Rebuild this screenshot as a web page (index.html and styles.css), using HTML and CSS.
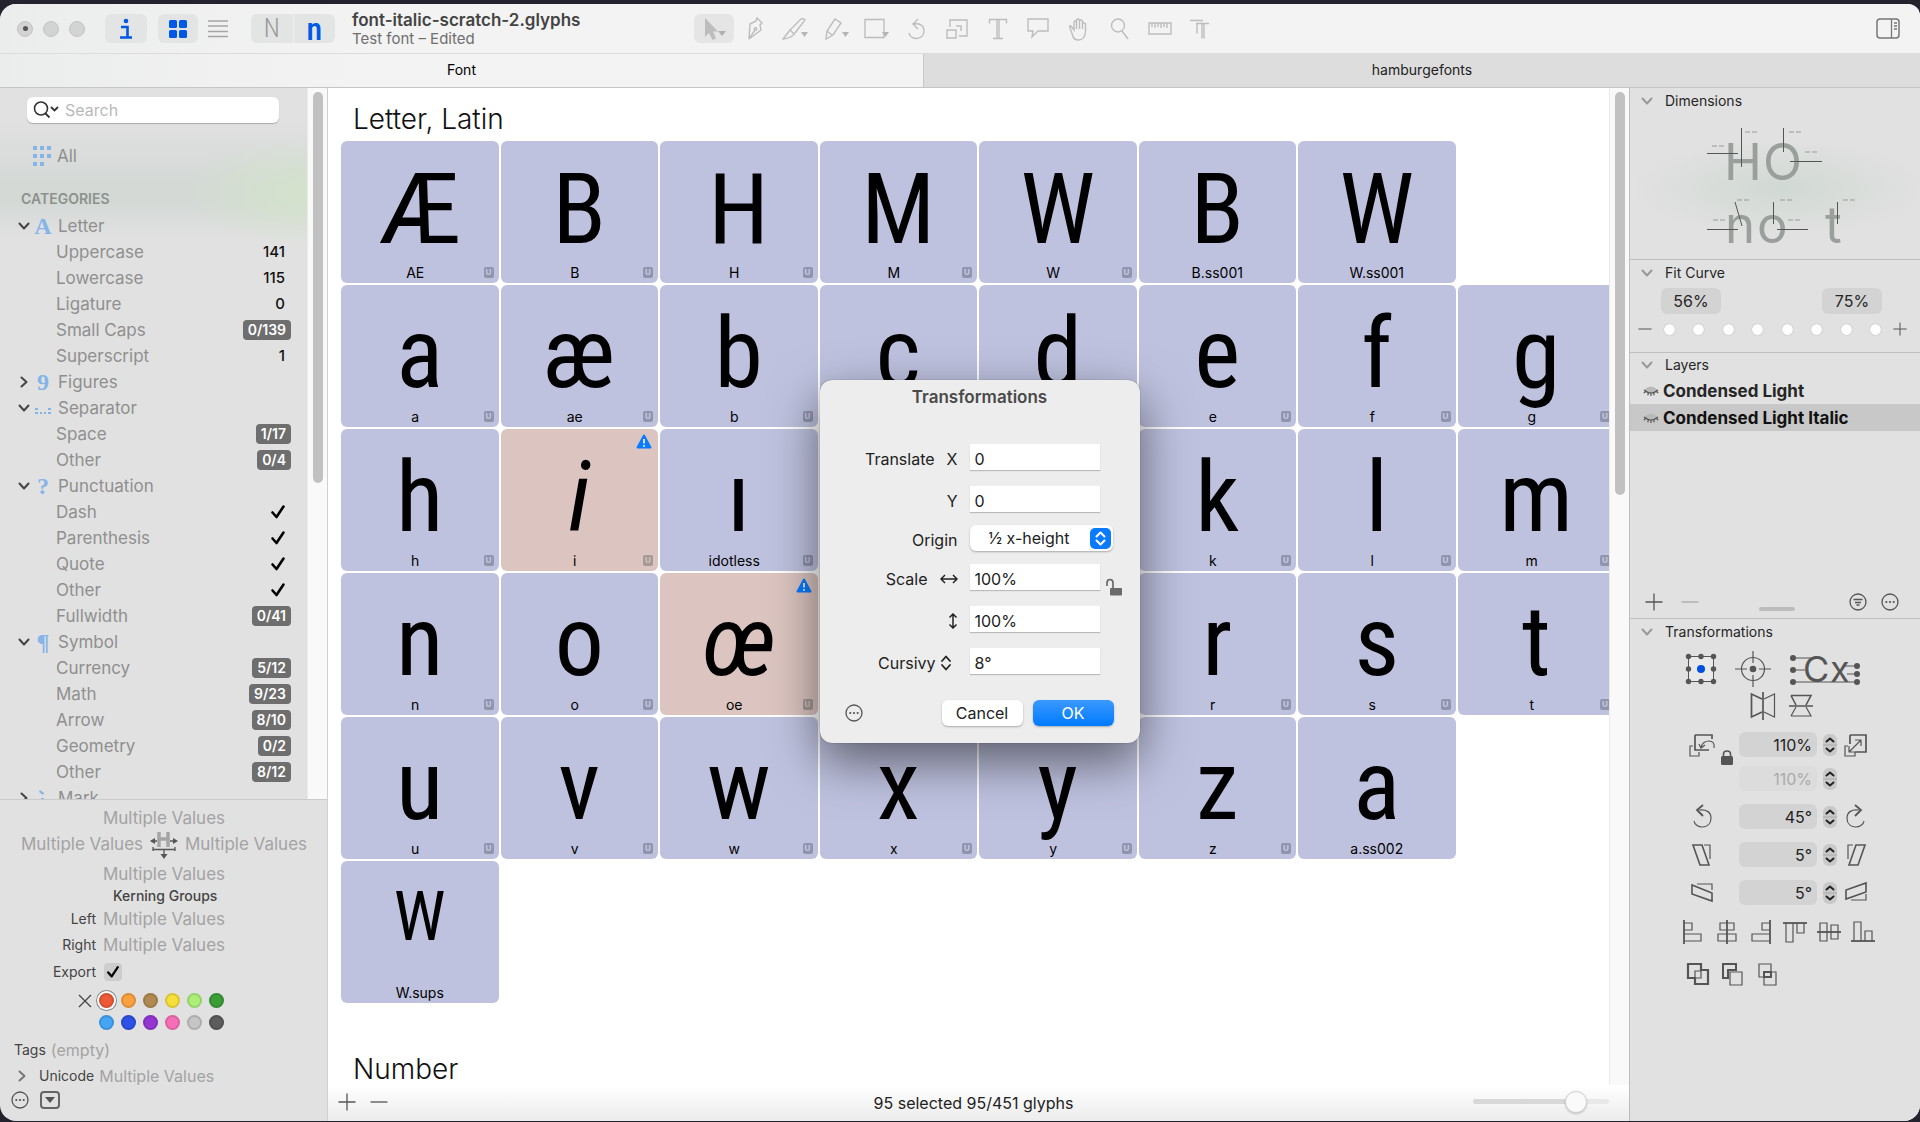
FILE: index.html
```html
<!DOCTYPE html>
<html lang="en">
<head>
<meta charset="utf-8">
<title>font-italic-scratch-2.glyphs</title>
<link rel="stylesheet" href="styles.css">
</head>
<body>
<svg class="defs" aria-hidden="true">
  <symbol id="down" viewBox="0 0 12 12"><path d="M1.5 3.5 6 8.5l4.500-5" fill="none" stroke="currentColor" stroke-width="2" stroke-linecap="round" stroke-linejoin="round"/></symbol>
  <symbol id="right" viewBox="0 0 12 12"><path d="M3.500 1.500 8.500 6l-5 4.500" fill="none" stroke="currentColor" stroke-width="2" stroke-linecap="round" stroke-linejoin="round"/></symbol>
  <symbol id="check" viewBox="0 0 16 16"><path d="M2.500 8.500 6.500 13 13.500 2.500" fill="none" stroke="currentColor" stroke-width="2.600" stroke-linecap="round" stroke-linejoin="round"/></symbol>
  <symbol id="more" viewBox="0 0 18 18"><circle cx="9" cy="9" r="8" fill="none" stroke="currentColor" stroke-width="1.300"/><circle cx="5.300" cy="9" r="1.100" fill="currentColor"/><circle cx="9" cy="9" r="1.100" fill="currentColor"/><circle cx="12.700" cy="9" r="1.100" fill="currentColor"/></symbol>
  <symbol id="plus" viewBox="0 0 18 18"><path d="M9 .5v17M.5 9h17" stroke="currentColor" stroke-width="1.300"/></symbol>
  <symbol id="minus" viewBox="0 0 18 18"><path d="M.5 9h17" stroke="currentColor" stroke-width="1.300"/></symbol>
  <symbol id="updown" viewBox="0 0 12 18"><path d="M2 7l4-4.500L10 7M2 11l4 4.500L10 11" fill="none" stroke="currentColor" stroke-width="1.800" stroke-linecap="round" stroke-linejoin="round"/></symbol>
  <symbol id="step" viewBox="0 0 14 22"><rect width="14" height="22" rx="6" fill="#c9c9c9"/><path d="M0 11h14" stroke="#aaa"/><path d="M3.500 7.500 7 4.500l3.500 3M3.500 14.500l3.500 3 3.500-3" fill="none" stroke="#222" stroke-width="2" stroke-linecap="round" stroke-linejoin="round"/></symbol>
  <symbol id="warn" viewBox="0 0 16 15"><path d="M8 1.500 14.500 13.500h-13z" fill="#0a7aff" stroke="#0a7aff" stroke-width="2" stroke-linejoin="round"/><path d="M8 5v4.500M8 11v1.800" stroke="#fff" stroke-width="1.600"/></symbol>
  <symbol id="eye" viewBox="0 0 16 12"><path d="M1 5Q8-2 15 5L14 7Q8 11 2 7z" fill="#b9b9b9"/><path d="M1 5q7 6 14 0M2.500 6.500.8 8.200M5.500 8l-.8 2.200M8 8.400V11M10.500 8l.8 2.200M13.500 6.500l1.700 1.700" fill="none" stroke="#555" stroke-width="1.200"/></symbol>
</svg>

<div class="window">
  <header class="toolbar">
    <div class="lights"><span class="light edited"></span><span class="light"></span><span class="light"></span></div>
    <button class="tool on info" type="button" aria-label="Info"><svg width="14" height="22" viewBox="0 0 14 22"><circle cx="7" cy="3" r="2.300"/><path d="M2 9h6.500v10M1 19.500h12" fill="none" stroke="currentColor" stroke-width="2.600"/></svg></button>
    <div class="views">
      <button class="tool on" type="button" aria-label="Grid view"><svg width="20" height="20" viewBox="0 0 20 20"><rect x="1" y="1" width="8" height="8" rx="1.500"/><rect x="11" y="1" width="8" height="8" rx="1.500"/><rect x="1" y="11" width="8" height="8" rx="1.500"/><rect x="11" y="11" width="8" height="8" rx="1.500"/></svg></button>
      <button class="tool" type="button" aria-label="List view"><svg width="20" height="20" viewBox="0 0 20 20"><path d="M0 2h20M0 7h20M0 12.500h20M0 17.500h20" stroke="#a5a5a5" stroke-width="1.500"/></svg></button>
    </div>
    <div class="cases"><button type="button" class="case upper">N</button><button type="button" class="case lower">n</button></div>
    <div class="titles"><h1>font-italic-scratch-2.glyphs</h1><p>Test font – Edited</p></div>
    <div class="tools">
      <button class="tool on" type="button" aria-label="Select"><svg width="26" height="24" viewBox="0 0 26 24"><path d="M4 1v19l4-4 3.500 7 3.500-1.500-3-7h5z" fill="#bdbdbd"/><path d="M17 14h8l-4 5z" fill="#b0b0b0"/></svg></button>
      <button class="tool" type="button" aria-label="Draw"><svg width="26" height="24" viewBox="0 0 26 24"><path d="M7 22 8 7l6-3 1-3 5 5-2 2 1 5-12 9 6-9"/><circle cx="13.500" cy="12" r="1.300"/></svg></button>
      <button class="tool" type="button" aria-label="Knife"><svg width="26" height="24" viewBox="0 0 26 24"><path d="M1 22q4-5 7-9l11-11q3-1 4 1L13 16q-3 5-12 6zM8 13l4 4"/><path class="tip" d="M19 15h7l-3.500 5z"/></svg></button>
      <button class="tool" type="button" aria-label="Pencil"><svg width="26" height="24" viewBox="0 0 26 24"><path d="M3 22 4 14 12 2l6 4-8 12zM4 14l5 4"/><path class="tip" d="M19 15h7l-3.500 5z"/></svg></button>
      <button class="tool" type="button" aria-label="Rectangle"><svg width="26" height="24" viewBox="0 0 26 24"><path d="M2 2.500h19v18H2z"/><path class="tip" d="M19 15h7l-3.500 5z"/></svg></button>
      <button class="tool" type="button" aria-label="Rotate"><svg width="26" height="24" viewBox="0 0 26 24"><path d="M5 16c2 8 15 7 15-2 0-6-5-8-10-7M14 2 9 7l5 5"/></svg></button>
      <button class="tool" type="button" aria-label="Scale"><svg width="26" height="24" viewBox="0 0 26 24"><path d="M6 10V3h17v16h-8M3 13h9v8H3zM12 9h5v5"/></svg></button>
      <button class="tool" type="button" aria-label="Text"><svg width="26" height="24" viewBox="0 0 26 24"><path d="M4.500 6.500v-4h17v4M12 2.500v19M14 2.500v19M8 21.500h10"/></svg></button>
      <button class="tool" type="button" aria-label="Annotate"><svg width="26" height="24" viewBox="0 0 26 24"><path d="M3 2h20v12H13l-6 6 1-6H3z"/></svg></button>
      <button class="tool" type="button" aria-label="Hand"><svg width="26" height="24" viewBox="0 0 26 24"><path d="M4 11q-1-3 1-2l3 4V5q1-2 2.500 0V3q1.500-2 3 0v1q1.500-2 3 0v2q1.500-1 3 1v8q-1 8-7 8-5 0-6-5zM10.500 5v7M13.500 4v8M16.500 5v7"/></svg></button>
      <button class="tool" type="button" aria-label="Zoom"><svg width="26" height="24" viewBox="0 0 26 24"><circle cx="12" cy="8.500" r="6.500"/><path d="M16 14l6 8"/></svg></button>
      <button class="tool" type="button" aria-label="Measure"><svg width="26" height="24" viewBox="0 0 26 24"><path d="M2 6h22v11H2zM5 6v4M8 6v5M11 6v4M14 6v5M17 6v4M20 6v5"/></svg></button>
      <button class="tool" type="button" aria-label="True type"><svg width="26" height="24" viewBox="0 0 26 24"><path d="M3 3.500h13M9 6.500h13M10 6.500v10M15 6.500v15M17 6.500v15"/></svg></button>
    </div>
    <button class="tool panel-toggle" type="button" aria-label="Toggle sidebar"><svg width="24" height="21" viewBox="0 0 24 21"><rect x="1" y="1" width="22" height="19" rx="3" fill="none" stroke="#777" stroke-width="1.500"/><path d="M15.500 1v19M18 5h3M18 8h3M18 11h3" stroke="#777" stroke-width="1.300"/></svg></button>
  </header>

  <nav class="tabs"><a href="#font" class="tab active">Font</a><a href="#hamburgefonts" class="tab">hamburgefonts</a></nav>

  <div class="body">
    <aside class="left">
      <div class="browser">
        <div class="filters">
          <label class="search"><svg width="26" height="18" viewBox="0 0 26 18"><circle cx="8" cy="7.500" r="6.500" fill="none" stroke="#333" stroke-width="1.600"/><path d="m12.500 12.500 4 4M18 6l3.500 3.500L25 6" fill="none" stroke="#333" stroke-width="1.800"/></svg><input type="search" placeholder="Search" aria-label="Search"></label>
          <div class="row all"><svg width="18" height="22" viewBox="0 0 18 22" stroke="#85b4e8" stroke-width="4" fill="none"><path d="M0 3h18M0 11h18M0 19h11" stroke-dasharray="4 3"/></svg><span>All</span></div>
          <h2>CATEGORIES</h2>
          <ul class="list">
            <li class="row group"><svg class="chev"><use href="#down"/></svg><i class="serif">A</i><span>Letter</span></li>
            <li class="row"><span>Uppercase</span><b>141</b></li>
            <li class="row"><span>Lowercase</span><b>115</b></li>
            <li class="row"><span>Ligature</span><b>0</b></li>
            <li class="row"><span>Small Caps</span><b class="pill">0/139</b></li>
            <li class="row"><span>Superscript</span><b>1</b></li>
            <li class="row group"><svg class="chev"><use href="#right"/></svg><i class="serif">9</i><span>Figures</span></li>
            <li class="row group"><svg class="chev"><use href="#down"/></svg><i><svg width="16" height="16" viewBox="0 0 16 16" fill="#85b4e8"><path d="M0 8h3v2H0zM0 12h3v2H0zM5 12h2v2H5zM9 12h2v2H9zM13 8h3v2h-3zM13 12h3v2h-3z"/></svg></i><span>Separator</span></li>
            <li class="row"><span>Space</span><b class="pill">1/17</b></li>
            <li class="row"><span>Other</span><b class="pill">0/4</b></li>
            <li class="row group"><svg class="chev"><use href="#down"/></svg><i class="serif">?</i><span>Punctuation</span></li>
            <li class="row"><span>Dash</span><svg class="tick"><use href="#check"/></svg></li>
            <li class="row"><span>Parenthesis</span><svg class="tick"><use href="#check"/></svg></li>
            <li class="row"><span>Quote</span><svg class="tick"><use href="#check"/></svg></li>
            <li class="row"><span>Other</span><svg class="tick"><use href="#check"/></svg></li>
            <li class="row"><span>Fullwidth</span><b class="pill">0/41</b></li>
            <li class="row group"><svg class="chev"><use href="#down"/></svg><i class="serif">¶</i><span>Symbol</span></li>
            <li class="row"><span>Currency</span><b class="pill">5/12</b></li>
            <li class="row"><span>Math</span><b class="pill">9/23</b></li>
            <li class="row"><span>Arrow</span><b class="pill">8/10</b></li>
            <li class="row"><span>Geometry</span><b class="pill">0/2</b></li>
            <li class="row"><span>Other</span><b class="pill">8/12</b></li>
            <li class="row group"><svg class="chev"><use href="#right"/></svg><i><svg width="16" height="18" viewBox="0 0 16 18" fill="#85b4e8"><path d="M5 1l4 3-1 2-4-3zM0 10h3v2H0zM13 10h3v2h-3zM6 9h3v2H6zM2 14h4v2H2zM10 14h4v2h-4z"/></svg></i><span>Mark</span></li>
          </ul>
        </div>
        <div class="track"><div class="thumb"></div></div>
      </div>

      <form class="inspector">
        <input class="mv" placeholder="Multiple Values" aria-label="Glyph name">
        <div class="bearings">
          <input class="mv" placeholder="Multiple Values" aria-label="Left sidebearing">
          <svg width="28" height="30" viewBox="0 0 28 30"><path d="M9 1v15M18 1v15M9 8h9" stroke="#a5a5a5" stroke-width="3.500"/><path d="M1 10h6M20 10h6M3 16v4M25 16v4M3 18.500h22M14 19v6" stroke="#555" stroke-width="1.300"/><path d="M0 10l5-3v6zM28 10l-5-3v6zM10.500 23h7L14 28z" fill="#555"/></svg>
          <input class="mv" placeholder="Multiple Values" aria-label="Right sidebearing">
        </div>
        <input class="mv" placeholder="Multiple Values" aria-label="Width">
        <h3>Kerning Groups</h3>
        <div class="pair"><label for="kl">Left</label><input id="kl" class="mv" placeholder="Multiple Values"></div>
        <div class="pair"><label for="kr">Right</label><input id="kr" class="mv" placeholder="Multiple Values"></div>
        <div class="pair export"><label for="ex">Export</label><span class="checkbox"><input id="ex" type="checkbox" checked><svg width="14" height="14"><use href="#check"/></svg></span></div>
        <fieldset class="colors" aria-label="Color">
          <button type="button" class="clear" aria-label="No color"><svg width="14" height="14" viewBox="0 0 14 14"><path d="M1 1l12 12M13 1 1 13" stroke="#444" stroke-width="1.300"/></svg></button>
          <input type="radio" name="c" class="red" aria-label="Red" checked><input type="radio" name="c" class="orange" aria-label="Orange"><input type="radio" name="c" class="brown" aria-label="Brown"><input type="radio" name="c" class="yellow" aria-label="Yellow"><input type="radio" name="c" class="lime" aria-label="Light green"><input type="radio" name="c" class="green" aria-label="Green">
          <input type="radio" name="c" class="sky first" aria-label="Light blue"><input type="radio" name="c" class="blue" aria-label="Blue"><input type="radio" name="c" class="purple" aria-label="Purple"><input type="radio" name="c" class="pink" aria-label="Pink"><input type="radio" name="c" class="silver" aria-label="Light gray"><input type="radio" name="c" class="gray" aria-label="Gray">
        </fieldset>
        <div class="tags"><label for="tags">Tags</label><input id="tags" class="mv" placeholder="(empty)"></div>
        <div class="unicode"><svg class="chev"><use href="#right"/></svg><label for="uni">Unicode</label><input id="uni" class="mv" placeholder="Multiple Values"></div>
        <div class="actions">
          <button type="button" aria-label="Actions"><svg width="18" height="18"><use href="#more"/></svg></button>
          <button type="button" aria-label="Collapse"><svg width="20" height="18" viewBox="0 0 20 18"><rect x="1" y="1" width="18" height="16" rx="3" fill="none" stroke="#666" stroke-width="2"/><path d="M5 6h10l-5 6z" fill="#555"/></svg></button>
        </div>
      </form>
    </aside>

    <main class="center">
      <div class="glyphs">
        <h2>Letter, Latin</h2>
        <div class="grid">
          <div class="cell"><span class="g">Æ</span><p>AE<em>U</em></p></div>
          <div class="cell"><span class="g">B</span><p>B<em>U</em></p></div>
          <div class="cell"><span class="g">H</span><p>H<em>U</em></p></div>
          <div class="cell"><span class="g">M</span><p>M<em>U</em></p></div>
          <div class="cell"><span class="g">W</span><p>W<em>U</em></p></div>
          <div class="cell"><span class="g">B</span><p>B.ss001</p></div>
          <div class="cell"><span class="g">W</span><p>W.ss001</p></div>
          <div class="cell newrow"><span class="g">a</span><p>a<em>U</em></p></div>
          <div class="cell"><span class="g">æ</span><p>ae<em>U</em></p></div>
          <div class="cell"><span class="g">b</span><p>b<em>U</em></p></div>
          <div class="cell"><span class="g">c</span></div>
          <div class="cell"><span class="g">d</span></div>
          <div class="cell"><span class="g">e</span><p>e<em>U</em></p></div>
          <div class="cell"><span class="g">f</span><p>f<em>U</em></p></div>
          <div class="cell"><span class="g">g</span><p>g<em>U</em></p></div>
          <div class="cell"><span class="g">h</span><p>h<em>U</em></p></div>
          <div class="cell marked"><svg class="warn"><use href="#warn"/></svg><span class="g">i</span><p>i<em>U</em></p></div>
          <div class="cell"><span class="g">ı</span><p>idotless<em>U</em></p></div>
          <div class="cell"></div>
          <div class="cell"></div>
          <div class="cell"><span class="g">k</span><p>k<em>U</em></p></div>
          <div class="cell"><span class="g">l</span><p>l<em>U</em></p></div>
          <div class="cell"><span class="g">m</span><p>m<em>U</em></p></div>
          <div class="cell"><span class="g">n</span><p>n<em>U</em></p></div>
          <div class="cell"><span class="g">o</span><p>o<em>U</em></p></div>
          <div class="cell marked"><svg class="warn"><use href="#warn"/></svg><span class="g">œ</span><p>oe<em>U</em></p></div>
          <div class="cell"></div>
          <div class="cell"></div>
          <div class="cell"><span class="g">r</span><p>r<em>U</em></p></div>
          <div class="cell"><span class="g">s</span><p>s<em>U</em></p></div>
          <div class="cell"><span class="g">t</span><p>t<em>U</em></p></div>
          <div class="cell"><span class="g">u</span><p>u<em>U</em></p></div>
          <div class="cell"><span class="g">v</span><p>v<em>U</em></p></div>
          <div class="cell"><span class="g">w</span><p>w<em>U</em></p></div>
          <div class="cell"><span class="g">x</span><p>x<em>U</em></p></div>
          <div class="cell"><span class="g">y</span><p>y<em>U</em></p></div>
          <div class="cell"><span class="g">z</span><p>z<em>U</em></p></div>
          <div class="cell"><span class="g">a</span><p>a.ss002</p></div>
          <div class="cell newrow"><span class="g sups">W</span><p>W.sups</p></div>
        </div>
        <h2 class="next">Number</h2>
      </div>
      <div class="track"><div class="thumb main-thumb"></div></div>
      <footer class="status">
        <div><button type="button" aria-label="Add glyph"><svg width="18" height="18"><use href="#plus"/></svg></button><button type="button" aria-label="Remove glyph"><svg width="18" height="18"><use href="#minus"/></svg></button></div>
        <p>95 selected 95/451 glyphs</p>
        <input class="zoom" type="range" min="0" max="100" value="81" aria-label="Preview size">
      </footer>

      <form class="dialog" role="dialog" aria-label="Transformations">
        <h2>Transformations</h2>
        <div class="fields">
          <label for="tx">Translate<span>X</span></label><input id="tx" value="0">
          <label for="ty">Y</label><input id="ty" value="0">
          <label for="or">Origin</label><span class="select"><select id="or"><option>½ x-height</option></select><svg width="21" height="21" viewBox="0 0 21 21"><rect width="21" height="21" rx="5" fill="#0a7aff"/><path d="M6.500 8.500l4-4 4 4M6.500 12.500l4 4 4-4" fill="none" stroke="#fff" stroke-width="2" stroke-linecap="round" stroke-linejoin="round"/></svg></span>
          <label for="sx">Scale<svg width="18" height="12" viewBox="0 0 18 12"><path d="M1 6h16M5 2 1 6l4 4M13 2l4 4-4 4" fill="none" stroke="#222" stroke-width="1.500"/></svg></label><input id="sx" value="100%">
          <button type="button" class="lock" aria-label="Unlock proportions"><svg width="16" height="18" viewBox="0 0 16 18"><rect x="4" y="10" width="12" height="7.500" rx="1" fill="#6a6a6a"/><path d="M1 8V5q0-3.500 3-3.500T7 5v5" fill="none" stroke="#6a6a6a" stroke-width="1.700"/></svg></button>
          <label for="sy"><svg width="10" height="16" viewBox="0 0 10 16"><path d="M5 1v14M1.500 4.500 5 1l3.500 3.500M1.500 11.500 5 15l3.500-3.500" fill="none" stroke="#222" stroke-width="1.500"/></svg></label><input id="sy" value="100%" aria-label="Vertical scale">
          <label for="cu" class="cursivy">Cursivy<svg width="12" height="18"><use href="#updown"/></svg></label><input id="cu" value="8°">
        </div>
        <div class="buttons">
          <button type="button" class="dots" aria-label="More"><svg width="18" height="18"><use href="#more"/></svg></button>
          <button type="button" class="push">Cancel</button><button type="button" class="push primary">OK</button>
        </div>
      </form>
    </main>

    <aside class="palette">
      <section class="dimensions">
        <h3><svg class="chev"><use href="#down"/></svg>Dimensions</h3>
        <svg width="290" height="144" viewBox="0 0 290 144">
          <g class="dimtext"><text x="94" y="66">H</text><text x="133" y="66">O</text><text x="95" y="129">n</text><text x="127" y="129">o</text><text x="195" y="129">t</text></g>
          <path d="M111.500 14v39M77 39.500h31M153.500 14v24M160 47.500h32M105 88l7 24M143.500 88v22M207.500 88v22M77 115.500h31M147 115.500h31" stroke="#555" fill="none"/>
          <path d="M115 18h12M159 18h12M82 32h12M175 38h12M107 86h12M150 86h12M213 86h12M83 106h12M158 106h12" stroke="#999" stroke-dasharray="5 2"/>
        </svg>
      </section>
      <section class="fit">
        <h3><svg class="chev"><use href="#down"/></svg>Fit Curve</h3>
        <div class="percents"><input value="56%" aria-label="Minimum"><input value="75%" aria-label="Maximum"></div>
        <div class="steps">
          <button type="button" aria-label="Less"><svg width="14" height="14"><use href="#minus"/></svg></button>
          <div class="stops"><input type="radio" name="f" aria-label="1"><input type="radio" name="f" aria-label="2"><input type="radio" name="f" aria-label="3"><input type="radio" name="f" aria-label="4"><input type="radio" name="f" aria-label="5"><input type="radio" name="f" aria-label="6"><input type="radio" name="f" aria-label="7"><input type="radio" name="f" aria-label="8"></div>
          <button type="button" aria-label="More curve"><svg width="14" height="14"><use href="#plus"/></svg></button>
        </div>
      </section>
      <section class="layers">
        <h3><svg class="chev"><use href="#down"/></svg>Layers</h3>
        <ul><li><svg width="16" height="12"><use href="#eye"/></svg>Condensed Light</li><li class="selected"><svg width="16" height="12"><use href="#eye"/></svg>Condensed Light Italic</li></ul>
        <div class="layerbar">
          <button type="button" aria-label="Add layer"><svg width="18" height="18"><use href="#plus"/></svg></button>
          <button type="button" class="dim" aria-label="Remove layer"><svg width="18" height="18"><use href="#minus"/></svg></button>
          <span class="handle"></span>
          <button type="button" aria-label="Filter"><svg width="18" height="18" viewBox="0 0 18 18"><circle cx="9" cy="9" r="8" fill="none" stroke="currentColor" stroke-width="1.300"/><path d="M4.500 6.500h9M6 9.500h6M7.500 12h3" stroke="currentColor" stroke-width="1.300"/></svg></button>
          <button type="button" aria-label="Layer actions"><svg width="18" height="18"><use href="#more"/></svg></button>
        </div>
      </section>
      <section class="transform">
        <h3><svg class="chev"><use href="#down"/></svg>Transformations</h3>
        <div class="origins">
          <svg width="32" height="32" viewBox="0 0 32 32"><path d="M3.500 3.500h25v25h-25z" fill="#e9e9e9" stroke="#555"/><g fill="#555"><circle cx="3.500" cy="3.500" r="2.700"/><circle cx="16" cy="3.500" r="2.700"/><circle cx="28.500" cy="3.500" r="2.700"/><circle cx="3.500" cy="16" r="2.700"/><circle cx="28.500" cy="16" r="2.700"/><circle cx="3.500" cy="28.500" r="2.700"/><circle cx="16" cy="28.500" r="2.700"/><circle cx="28.500" cy="28.500" r="2.700"/></g><circle cx="16" cy="16" r="4" fill="#0050e0"/></svg>
          <svg width="36" height="36" viewBox="0 0 36 36"><circle cx="18" cy="18" r="11.500" fill="none" stroke="#555" stroke-width="1.200"/><path d="M18 0v12M18 24v12M0 18h12M24 18h12" stroke="#555" stroke-width="1.200"/><circle cx="18" cy="18" r="3.300" fill="#555"/></svg>
          <svg width="72" height="36" viewBox="0 0 72 36"><path d="M4 7h24M4 19h12M4 31h64M56 15h12M58 23h10" stroke="#555" stroke-width="1.200"/><g fill="#555"><circle cx="4" cy="7" r="3"/><circle cx="4" cy="19" r="3"/><circle cx="4" cy="31" r="3"/><circle cx="68" cy="15" r="3"/><circle cx="68" cy="23" r="3"/><circle cx="68" cy="31" r="3"/></g><text x="14" y="31">C</text><text x="41" y="31">x</text></svg>
        </div>
        <div class="flips">
          <button type="button" aria-label="Flip horizontally"><svg width="26" height="28" viewBox="0 0 26 28"><path d="M12 7 1.500 2v23L12 20" stroke-width="1.700"/><path d="M13 0v28" stroke-width="1.700"/><path d="m14 7 10.500-5v23L14 20"/></svg></button>
          <button type="button" aria-label="Flip vertically"><svg width="26" height="28" viewBox="0 0 26 28"><path d="M3 3.500h20L18 13M3 3.500 8 13M1 14h24" stroke-width="1.600"/><path d="M3 24h20l-5-9M3 24l5-9"/></svg></button>
        </div>
        <div class="ops">
          <button type="button" class="op" aria-label="Scale down"><svg width="26" height="24" viewBox="0 0 26 24"><path d="M6 2h17v4M6 2v15h14" stroke-width="1.700"/><path d="M4 13H1v10h9v-4M25 15q1-7-5-7t-8 6M10 11l2 4 4-3"/></svg></button><svg class="padlock" width="12" height="15" viewBox="0 0 12 15"><rect y="6" width="12" height="9" rx="1.500" fill="#555"/><path d="M2.500 7V4q0-3 3.500-3t3.500 3v3" fill="none" stroke="#555" stroke-width="1.600"/></svg><input value="110%" aria-label="Scale"><svg class="stepper"><use href="#step"/></svg><button type="button" class="op" aria-label="Scale up"><svg width="26" height="24" viewBox="0 0 26 24"><path d="M7 2h16v17H12M7 2v9" stroke-width="1.700"/><path d="M5 13H2v10h10v-4M6 19 18 7M12 7h6v6M6 13v6h6"/></svg></button>
          <span></span><span></span><input class="off" value="110%" aria-label="Scale vertical" disabled><svg class="stepper"><use href="#step"/></svg><span></span>
        </div>
        <div class="ops wide">
          <button type="button" class="op" aria-label="Rotate left"><svg width="26" height="26" viewBox="0 0 26 26"><path d="M5 17c1 8 17 9 17-3 0-6-5-9-12-8"/><path d="m14 1-6 5 6 6" stroke-width="1.800"/></svg></button><span></span><input value="45°" aria-label="Rotation"><svg class="stepper"><use href="#step"/></svg><button type="button" class="op" aria-label="Rotate right"><svg width="26" height="26" viewBox="0 0 26 26"><path d="M21 17c-1 8-17 9-17-3 0-6 5-9 12-8"/><path d="m12 1 6 5-6 6" stroke-width="1.800"/></svg></button>
          <button type="button" class="op" aria-label="Slant left"><svg width="26" height="24" viewBox="0 0 26 24"><path d="M4 2h9l7 20h-9z" stroke-width="1.600"/><path d="M15 2h6v14"/></svg></button><span></span><input value="5°" aria-label="Slant horizontal"><svg class="stepper"><use href="#step"/></svg><button type="button" class="op" aria-label="Slant right"><svg width="26" height="24" viewBox="0 0 26 24"><path d="M22 2h-9L6 22h9z" stroke-width="1.600"/><path d="M10 2H5v14"/></svg></button>
          <button type="button" class="op" aria-label="Slant down"><svg width="26" height="24" viewBox="0 0 26 24"><path d="M3 4v9l20 7v-8z" stroke-width="1.600"/><path d="M8 3h15v6"/></svg></button><span></span><input value="5°" aria-label="Slant vertical"><svg class="stepper"><use href="#step"/></svg><button type="button" class="op" aria-label="Slant up"><svg width="26" height="24" viewBox="0 0 26 24"><path d="M23 2v9L3 18v-9z" stroke-width="1.600"/><path d="M8 19h15v-6"/></svg></button>
        </div>
        <div class="align">
          <button type="button" aria-label="Align left"><svg width="24" height="24" viewBox="0 0 24 24"><path d="M3 0v24" stroke-width="1.800"/><path d="M3 3h8v7H3M3 14h17v7H3"/></svg></button>
          <button type="button" aria-label="Align centre"><svg width="24" height="24" viewBox="0 0 24 24"><path d="M12 0v24" stroke-width="1.800"/><path d="M5 3h14v7H5zM3 14h18v7H3z"/></svg></button>
          <button type="button" aria-label="Align right"><svg width="24" height="24" viewBox="0 0 24 24"><path d="M21 0v24" stroke-width="1.800"/><path d="M21 3h-8v7h8M21 14H3v7h18"/></svg></button>
          <button type="button" aria-label="Align top"><svg width="24" height="24" viewBox="0 0 24 24"><path d="M0 3h24" stroke-width="1.800"/><path d="M3 3v19h7V3M14 3v10h7V3"/></svg></button>
          <button type="button" aria-label="Align middle"><svg width="24" height="24" viewBox="0 0 24 24"><path d="M0 12h24" stroke-width="1.800"/><path d="M3 3h7v18H3zM14 5h7v14h-7z"/></svg></button>
          <button type="button" aria-label="Align bottom"><svg width="24" height="24" viewBox="0 0 24 24"><path d="M0 21h24" stroke-width="1.800"/><path d="M3 21V2h7v19M14 21V11h7v10"/></svg></button>
        </div>
        <div class="align bools">
          <button type="button" aria-label="Union"><svg width="24" height="24" viewBox="0 0 24 24"><path d="M2 2h13v6h7v14H9v-6H2z" stroke-width="2.200"/><path d="M9 16V9h6v7z"/></svg></button>
          <button type="button" aria-label="Subtract"><svg width="24" height="24" viewBox="0 0 24 24"><path d="M15 7V2H2v14h5V8h8z" stroke-width="2"/><path d="M9 10h12v13H9z"/></svg></button>
          <button type="button" aria-label="Intersect"><svg width="24" height="24" viewBox="0 0 24 24"><path d="M3 2h12v13H3zM8 10h12v13H8z"/><path d="M8 10h7v5H8z" stroke-width="2"/></svg></button>
        </div>
      </section>
    </aside>
  </div>
</div>
</body>
</html>
```
FILE: styles.css
```css
* { box-sizing: border-box; }

body {
  margin: 0;
  height: 100vh;
  padding: 4px 0 1px;
  background: #23222d;
  color: #262626;
  font: 16px/20px Inter, "Liberation Sans", sans-serif;
}

h1, h2, h3, p, ul, fieldset { margin: 0; padding: 0; border: 0; }
ul { list-style: none; }
button { margin: 0; padding: 0; border: 0; background: none; color: #555; font: inherit; display: grid; place-items: center; }
input, select { font: inherit; color: inherit; min-width: 0; margin: 0; padding: 0; border: 0; background: none; }
svg { display: block; flex: none; }
.defs { position: absolute; width: 0; height: 0; }
.chev { width: 12px; height: 12px; }

.window {
  height: 100%;
  display: flex;
  flex-direction: column;
  border-radius: 16px 12px 16px 16px;
  overflow: hidden;
  background: #e1e1e1;
}

/* Toolbar */
.toolbar {
  flex: none;
  height: 49px;
  padding: 0 20px 0 17px;
  display: flex;
  align-items: center;
  background: linear-gradient(90deg, #ebedec, #f3f3f3 20%);
}
.lights { display: flex; gap: 10px; }
.light { width: 16px; height: 16px; border-radius: 50%; background: #d3d3d3; border: 1px solid #c3c3c3; display: grid; place-items: center; }
.edited::after { content: ""; width: 5px; height: 5px; border-radius: 50%; background: #555; }
.tool { width: 40px; height: 29px; border-radius: 6px; color: #0059e6; }
.tool svg { fill: currentColor; }
.on { background: #e3e4e4; }
.info { width: 42px; margin: 0 11px 0 20px; }
.views { display: flex; margin-right: 13px; }
.cases { display: flex; width: 84px; height: 29px; border-radius: 6px; background: #e3e4e4; }
.case { flex: 1; font-family: "Roboto Condensed", "Liberation Sans Narrow", sans-serif; line-height: 29px; }
.upper { font-size: 26px; font-weight: 300; color: #999; border-right: 1px solid #eee; }
.lower { font-size: 32px; font-weight: 500; line-height: 26px; color: #0059e6; }
.titles { flex: none; margin-left: 17px; width: 342px; }
.titles h1 { font-size: 17px; line-height: 20px; font-weight: 600; color: #444; }
.titles p { font-size: 15px; line-height: 18px; color: #6f6f6f; }
.tools { flex: none; display: flex; justify-content: space-between; width: 526px; }
.tools .tool { color: #bdbdbd; }
.tools svg { fill: none; stroke: #bdbdbd; stroke-width: 1.400; }
.tools .on { background: #e5e5e5; }
.tools .on svg { stroke: none; }
.tools .tip { fill: #b5b5b5; stroke: none; }
.panel-toggle { margin-left: auto; width: 24px; }

.tabs { flex: none; display: flex; height: 35px; border-top: 1px solid #dcdcdc; border-bottom: 1px solid #c6c6c6; font-size: 14px; line-height: 31px; text-align: center; }
.tab { flex: 996; color: #222; text-decoration: none; background: #ddd; border-left: 1px solid #c8c8c8; }
.tab.active { flex: 923; color: #000; border: 0; background: linear-gradient(90deg, #ebedec, #f3f3f3 40%); }

.body { flex: 1; min-height: 0; display: grid; grid-template-columns: 328px minmax(0, 1fr) 291px; }

/* Left sidebar */
.left { display: flex; flex-direction: column; min-height: 0; border-right: 1px solid #d0d0d0; }
.browser { flex: 1; min-height: 0; display: flex; border-bottom: 1px solid #cbcbcb; }
.filters {
  flex: 1;
  overflow: hidden;
  padding-top: 9px;
  background:
    radial-gradient(ellipse 120px 55px at 100% 105px, #d4e3cc, #d4e3cc00),
    linear-gradient(#e1e1e1 30px, #d4d9d6 95px, #d4d9d6 115px, #e1e1e1 150px);
  color: #8f8f8f;
}
.search { display: flex; align-items: center; gap: 6px; height: 26px; margin: 0 28px 0 27px; padding-left: 6px; border-radius: 6px; background: #fff; box-shadow: 0 1px 1px #aaa; }
.search input { flex: 1; outline: 0; }
.search input::placeholder { color: #b9b9b9; }
.row { display: flex; align-items: center; height: 26px; padding: 0 16px 0 56px; font-size: 17px; }
.row b { margin-left: auto; padding: 0 6px; font-size: 15px; font-weight: 500; color: #111; }
.row .pill { padding: 0 5px; border-radius: 4px; background: #6e6e6e; color: #fff; font-size: 14px; font-weight: 600; }
.row.group { padding-left: 18px; }
.group .chev { color: #444; }
.group i { width: 18px; margin: 0 6px 0 4px; font-style: normal; display: grid; justify-items: center; color: #85b4e8; }
.group .serif { font: bold 24px/20px "Liberation Serif", serif; }
.row.all { padding-left: 33px; gap: 6px; margin-top: 20px; }
.filters h2 { margin: 20px 0 4px 21px; font-size: 14px; line-height: 20px; font-weight: 600; color: #8b918d; }
.tick { width: 16px; height: 16px; margin: 0 5px 0 auto; color: #000; }
.track { width: 20px; padding: 4px 5px; background: #f9f9f9; border-left: 1px solid #eaeaea; }
.thumb { width: 10px; height: 391px; border-radius: 5px; background: #c1c1c1; }
.main-thumb { height: 403px; }

/* Glyph inspector */
.inspector { flex: none; height: 321px; padding-top: 8px; display: flex; flex-direction: column; color: #444; font-size: 14px; }
.mv { width: 124px; height: 20px; font-size: 17px; text-align: center; outline: 0; }
.mv::placeholder { color: #a3a3a3; opacity: 1; }
.inspector > .mv { margin-left: 102px; }
.bearings { display: flex; align-items: center; gap: 6px; height: 32px; margin: 2px 0 2px 20px; }
.bearings .mv { margin-bottom: 4px; }
.inspector h3 { font-size: 14px; font-weight: 500; line-height: 20px; margin: 2px 0 0 113px; }
.pair { display: flex; align-items: center; gap: 6px; height: 26px; }
.pair label { width: 96px; text-align: right; }
.export { height: 28px; gap: 8px; }
.checkbox { display: grid; width: 18px; height: 18px; border-radius: 4px; background: #cdcdcd; place-items: center; color: #000; }
.checkbox > * { grid-area: 1 / 1; }
.checkbox input { appearance: none; width: 18px; height: 18px; }
.colors { display: grid; grid-template-columns: repeat(7, 15px); gap: 7px; margin: 7px 0 0 77px; }
.colors input { appearance: none; width: 15px; height: 15px; border-radius: 50%; box-shadow: inset 0 0 0 2px #0000001f; }
.colors .first { grid-column: 2; }
.colors .red { background: #ee5a36; box-shadow: inset 0 0 0 2px #0000001f, 0 0 0 2px #fff, 0 0 0 3px #888; }
.orange { background: #faa13f; } .brown { background: #b18a52; } .yellow { background: #f5df3c; }
.lime { background: #acee78; } .green { background: #3a9d36; } .sky { background: #44a5f5; }
.blue { background: #2d51e6; } .purple { background: #9435d3; } .pink { background: #f66fb6; }
.silver { background: #c6c6c6; } .gray { background: #5c5c5c; }
.tags, .unicode { display: flex; align-items: center; gap: 5px; height: 26px; }
.tags { margin: 7px 0 0 14px; }
.tags .mv { width: 80px; text-align: left; font-size: 16px; }
.unicode { padding-left: 16px; }
.unicode .chev { color: #777; margin-right: 6px; }
.unicode .mv { text-align: left; font-size: 16px; }
.actions { display: flex; gap: 11px; margin: 2px 0 0 11px; }

/* Glyph grid */
.center { position: relative; display: grid; grid-template: minmax(0, 1fr) 36px / minmax(0, 1fr) 20px; background: #fff; }
.glyphs { overflow: hidden; padding: 17px 0 0 13px; }
.glyphs h2 { margin-left: 12px; font-size: 28px; line-height: 28px; font-weight: 300; color: #111; }
.grid { display: grid; grid-template-columns: repeat(8, minmax(0, 1fr)); grid-auto-rows: 142px; gap: 2px; margin: 8px -6px 0 0; }
.glyphs .next { margin-top: 52px; }
.cell { display: grid; grid-template: 142px / 1fr; overflow: hidden; border-radius: 6px; background: #bfc2df; color: #000; }
.cell > * { grid-area: 1 / 1; }
.newrow { grid-column: 1; }
.g { justify-self: center; font-family: "Roboto Condensed", "Liberation Sans Narrow", sans-serif; font-size: 98px; line-height: 138px; height: 138px; }
.sups { font-size: 68px; line-height: 112px; }
.marked { background: #dcc5c1; }
.marked .g { font-style: italic; }
.warn { width: 16px; height: 15px; justify-self: end; margin: 5px 6px; }
.cell p { align-self: end; display: grid; grid-template-columns: 1fr; align-items: center; text-align: center; font-size: 14px; line-height: 19px; padding-bottom: 1px; }
.cell p:has(em) { grid-template-columns: 1fr 10px; padding: 0 5px 1px 6px; }
.cell em { height: 11px; border-radius: 2px; background: #9194ae; color: #c9cbe0; font: bold 8px/11px Inter, sans-serif; }
.marked em { background: #a59896; color: #d5c6c3; }
.status { grid-column: 1 / -1; display: grid; grid-template-columns: 1fr auto 1fr; align-items: center; padding: 0 20px 0 10px; background: linear-gradient(#fff, #ececec); color: #222; }
.status div { display: flex; gap: 14px; margin-bottom: 3px; }
.zoom { appearance: none; justify-self: end; width: 136px; height: 5px; margin-bottom: 3px; border-radius: 3px; background: linear-gradient(90deg, #d8d8d8 75%, #e8e8e8 75%); }
.zoom::-webkit-slider-thumb { appearance: none; width: 22px; height: 22px; border-radius: 50%; background: #fafafa; border: 1px solid #d2d2d2; box-shadow: 0 1px 2px #0003; }

/* Transformations dialog */
.dialog { position: absolute; top: 292px; left: 2px; right: 0; margin: 0 auto; width: 320px; height: 363px; padding: 7px 26px 0 0; border-radius: 12px; background: #ededed; box-shadow: 0 0 1px #0009, 0 18px 50px #0008; color: #222; }
.dialog h2 { font-size: 17px; line-height: 20px; font-weight: 600; color: #4a4a4a; text-align: center; padding-left: 26px; }
.fields { display: grid; grid-template-columns: 138px 130px 12px; column-gap: 12px; grid-template-rows: 26px 26px 20px 26px 26px 26px; row-gap: 16px; margin-top: 37px; align-items: center; }
.fields label { grid-column: 1; display: flex; justify-content: flex-end; align-items: center; gap: 12px; padding-top: 3px; }
.fields > input { grid-column: 2; height: 26px; padding: 3px 5px 0; background: #fff; box-shadow: 0 1px 1px #bbb; outline: 0; }
.select { grid-column: 2 / 4; width: 143px; height: 26px; display: grid; align-self: center; align-items: center; border-radius: 6px; background: #fff; box-shadow: 0 1px 2px #aaa; }
.select > * { grid-area: 1 / 1; }
.select select { appearance: none; padding-left: 19px; height: 26px; }
.select svg { justify-self: end; margin-right: 2px; pointer-events: none; }
.lock { grid-column: 3; grid-row: 4 / span 2; align-self: start; margin: 14px 0 0 -8px; }
.fields .cursivy { gap: 4px; padding-right: 6px; }
.buttons { display: flex; align-items: center; gap: 10px; margin-top: 26px; padding-left: 25px; }
.dots { margin-right: auto; }
.push { width: 81px; height: 26px; border-radius: 6px; background: #fff; color: #222; box-shadow: 0 1px 2px #aaa; }
.primary { background: linear-gradient(#3b99ff, #007aff); color: #fff; }

/* Right palette */
.palette { border-left: 1px solid #bdbdbd; background: #e1e1e1; }
.palette h3 { display: flex; align-items: center; gap: 12px; height: 26px; padding-left: 11px; font-size: 14px; font-weight: 400; }
.palette h3 .chev { color: #999; }
.palette section { border-bottom: 1px solid #bfbfbf; }
.palette .transform { border: 0; }
.dimensions { height: 172px; background: radial-gradient(ellipse 150px 50px at 150px 100px, #d1d9d3, #e1e1e100); }
.dimtext { font-size: 51px; fill: #9a9f9b; }
.fit { height: 93px; }
.percents { display: flex; justify-content: space-between; margin: 2px 38px 0 31px; }
.percents input { width: 60px; height: 26px; border-radius: 6px; background: #d3d3d3; text-align: center; }
.steps { display: flex; align-items: center; gap: 12px; margin: 8px 13px 0 8px; }
.stops { flex: 1; display: flex; justify-content: space-between; }
.steps input { appearance: none; width: 11px; height: 11px; border-radius: 50%; background: #fff; box-shadow: 0 0 1px #888; }
.layers { height: 266px; display: flex; flex-direction: column; font-size: 17px; font-weight: 700; }
.layers h3 { height: 24px; }
.layers li { display: flex; align-items: center; gap: 4px; height: 27px; padding-left: 13px; }
.layers .selected { background: #c8c8c8; color: #111; }
.layerbar { display: flex; align-items: center; margin-top: auto; padding: 0 21px 7px 15px; gap: 14px; }
.layerbar .handle { width: 36px; height: 4px; border-radius: 2px; background: #bcbcbc; margin: 0 auto; align-self: end; }
.layerbar .dim { margin: 0 6px 0 4px; color: #aaa; }
.origins { display: flex; align-items: center; gap: 18px; height: 40px; margin: 4px 0 0 55px; }
.origins text { font-size: 36px; fill: #555; }
.flips { display: flex; gap: 12px; margin: 3px 0 0 120px; }
.flips svg, .op svg, .align svg { fill: none; stroke: #555; stroke-width: 1.200; }
.ops { display: grid; grid-template-columns: 26px 12px 78px 14px 26px; grid-auto-rows: 25px; align-items: center; column-gap: 6px; row-gap: 9px; margin: 12px 0 0 59px; }
.padlock { align-self: end; margin-bottom: -8px; }
.ops input { height: 25px; border-radius: 6px; background: #d3d3d3; text-align: right; padding-right: 5px; color: #222; }
.ops input.off { background: #dcdcdc; color: #aaa; }
.stepper { width: 14px; height: 22px; }
.wide { row-gap: 13px; margin-top: 13px; }
.align { display: flex; gap: 10px; margin: 15px 0 0 51px; }
.bools { gap: 11px; margin: 18px 0 0 56px; }
```
